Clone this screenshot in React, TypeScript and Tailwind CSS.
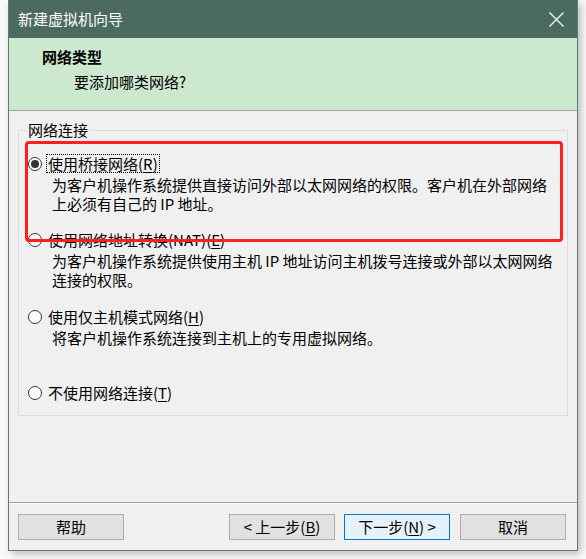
import React from 'react';

const font = { fontFamily: '"Noto Sans CJK SC", "Microsoft YaHei", sans-serif' };

const Radio = ({ checked }: { checked?: boolean }) => (
  <span className="-ml-[1px] flex h-[14px] w-[14px] shrink-0 items-center justify-center rounded-full border border-[#333] bg-white">
    {checked && <span className="h-[8px] w-[8px] rounded-full bg-[#333]" />}
  </span>
);

const Mnemonic = ({ k }: { k: string }) => (
  <>
    (<span className="underline underline-offset-2">{k}</span>)
  </>
);

const Option = ({
  checked,
  focused,
  label,
  k,
  desc,
  className,
}: {
  checked?: boolean;
  focused?: boolean;
  label: string;
  k: string;
  desc?: React.ReactNode;
  className?: string;
}) => (
  <div className={className}>
    <div className="flex h-[19px] items-center">
      <Radio checked={checked} />
      <span
        className={
          'ml-[4px] border px-[1px] leading-[17px] ' +
          (focused ? 'border-dotted border-black' : 'border-transparent')
        }
      >
        {label}
        <Mnemonic k={k} />
      </span>
    </div>
    {desc && <p className="mt-[2px] whitespace-nowrap pl-[23px] leading-[19px]">{desc}</p>}
  </div>
);

const Button = ({
  children,
  primary,
  className,
}: {
  children: React.ReactNode;
  primary?: boolean;
  className?: string;
}) => (
  <button
    className={
      'flex h-[26px] w-[106px] items-center justify-center border text-[15px] text-black ' +
      (primary ? 'border-[#0078d7] bg-[#e5f1fb] ' : 'border-[#adadad] bg-[#e1e1e1] ') +
      (className ?? '')
    }
  >
    {children}
  </button>
);

export default function App() {
  return (
    <div className="relative h-[559px] w-[586px] overflow-hidden bg-[#fafafa] text-[15px] text-black" style={font}>
      <div className="ml-[8px] flex h-[551px] w-[570px] flex-col border-x border-b border-[#5b7a70] bg-[#f0f0f0] shadow-[3px_3px_8px_rgba(0,0,0,0.25)]">
        {/* title bar */}
        <div className="flex h-[38px] shrink-0 items-center justify-between bg-[#4b6b62] pl-[9px] pr-[13px] text-white">
          <span className="leading-[20px]">新建虚拟机向导</span>
          <svg width="15" height="15" viewBox="0 0 15 15" className="text-white">
            <path d="M0.5 0.5 L14.5 14.5 M14.5 0.5 L0.5 14.5" stroke="currentColor" strokeWidth="1.2" />
          </svg>
        </div>

        {/* header */}
        <div className="h-[73px] shrink-0 border-b border-[#a0a0a0] bg-[#cce8cf] pt-[9px] leading-[20px]">
          <p className="pl-[33px] font-bold">网络类型</p>
          <p className="mt-[5px] pl-[65px]">要添加哪类网络?</p>
        </div>

        {/* body */}
        <div className="relative flex-1 px-[9px] pt-[9px]">
          <fieldset className="m-0 border border-[#dcdcdc] p-0">
            <legend className="ml-[8px] px-[1px] leading-[20px]">网络连接</legend>
            <div className="pb-[13px] pl-[10px] pt-[14px]">
              <Option
                checked
                focused
                label="使用桥接网络"
                k="R"
                desc={
                  <>
                    为客户机操作系统提供直接访问外部以太网网络的权限。客户机在外部网络
                    <br />
                    上必须有自己的 IP 地址。
                  </>
                }
              />
              <Option
                className="mt-[17px]"
                label="使用网络地址转换(NAT)"
                k="E"
                desc={
                  <>
                    为客户机操作系统提供使用主机 IP 地址访问主机拨号连接或外部以太网网络
                    <br />
                    连接的权限。
                  </>
                }
              />
              <Option
                className="mt-[18px]"
                label="使用仅主机模式网络"
                k="H"
                desc="将客户机操作系统连接到主机上的专用虚拟网络。"
              />
              <Option className="mt-[36px]" label="不使用网络连接" k="T" />
            </div>
          </fieldset>
          {/* red annotation box */}
          <div className="pointer-events-none absolute left-[16px] top-[30px] h-[101px] w-[538px] rounded-[4px] border-[3px] border-[#ff1f1f]" />
        </div>

        {/* footer */}
        <div className="shrink-0 border-t border-[#a0a0a0]">
          <div className="flex border-t border-white pb-[10px] pl-[9px] pr-[11px] pt-[10px]">
            <Button>帮助</Button>
            <div className="flex-1" />
            <Button>
              &lt; 上一步<Mnemonic k="B" />
            </Button>
            <Button primary className="ml-[9px]">
              下一步<Mnemonic k="N" /> &gt;
            </Button>
            <Button className="ml-[10px]">取消</Button>
          </div>
        </div>
      </div>
    </div>
  );
}
